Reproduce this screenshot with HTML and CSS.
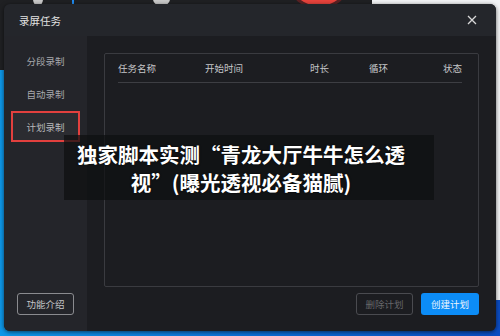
FILE: index.html
```html
<!DOCTYPE html>
<html lang="zh">
<head>
<meta charset="utf-8">
<title>录屏任务</title>
<link rel="stylesheet" href="styles.css">
</head>
<body>
<div class="desktop">
  <div class="bg-dark"></div>
  <div class="bg-light"></div>
  <div class="bg-blob b1"></div>
  <div class="bg-line"></div>
  <div class="bg-blob b2"></div>
  <div class="bg-red"></div>

  <div class="dialog">
    <div class="dlg-head">
      <span class="dlg-title">录屏任务</span>
      <svg class="close" width="10" height="10" viewBox="0 0 10 10"><path d="M1 1L9 9M9 1L1 9" stroke="#d8d8d8" stroke-width="1.3" fill="none"/></svg>
    </div>
    <div class="dlg-body">
      <nav class="side">
        <div class="side-item">分段录制</div>
        <div class="side-item">自动录制</div>
        <div class="side-item active">计划录制</div>
        <div class="side-spacer"></div>
        <button class="btn btn-outline">功能介绍</button>
      </nav>
      <main class="main">
        <div class="table">
          <div class="thead">
            <span class="c-name">任务名称</span>
            <span class="c-start">开始时间</span>
            <span class="c-dur">时长</span>
            <span class="c-loop">循环</span>
            <span class="c-state">状态</span>
          </div>
        </div>
        <div class="footer">
          <button class="btn btn-disabled">删除计划</button>
          <button class="btn btn-primary">创建计划</button>
        </div>
      </main>
    </div>
  </div>

  <div class="watermark">
    <p>独家脚本实测“青龙大厅牛牛怎么透<br>视”(曝光透视必备猫腻)</p>
  </div>
</div>
</body>
</html>
```
FILE: styles.css
```css
* { box-sizing: border-box; }
html, body { margin: 0; padding: 0; }
body {
  width: 500px;
  height: 336px;
  overflow: hidden;
  font-family: "Noto Sans CJK SC", "Noto Sans", sans-serif;
}
.desktop {
  position: relative;
  width: 500px;
  height: 336px;
  background: linear-gradient(to right, #0e97e8 0%, #0b6fd6 50%, #0b4cc2 100%);
  overflow: hidden;
}
.bg-dark {
  position: absolute; left: 0; top: 0; width: 372px; height: 70px;
  background: #1f2023;
}
.bg-light {
  position: absolute; left: 372px; top: 0; width: 128px; height: 300px;
  background: #f1f2f4;
}
.bg-blob { position: absolute; top: -8px; background: #c9c9c9; border-radius: 50%; }
.b1 { left: 33px; width: 10px; height: 14px; }
.b2 { left: 153px; width: 17px; height: 14px; }
.bg-line { position: absolute; left: 72px; top: 0; width: 2px; height: 8px; background: #1f8af0; }
.bg-red {
  position: absolute; left: 292px; top: -40px; width: 54px; height: 46px;
  border-radius: 50%; background: #e8433c; box-shadow: 0 0 0 3px #5a2224;
}

.dialog {
  position: absolute;
  left: 4px; top: 4px;
  width: 492px; height: 327px;
  border-radius: 6px;
  overflow: hidden;
  display: flex;
  flex-direction: column;
  background: #1c1d21;
  box-shadow: 0 1px 4px rgba(0,0,0,0.6);
}
.dlg-head {
  height: 32px;
  flex: none;
  background: #24262b;
  display: flex;
  align-items: center;
  justify-content: space-between;
  padding: 0 19px 0 15px;
}
.dlg-title { color: #e2e2e2; font-size: 10.5px; }
.close { display: block; }

.dlg-body { flex: 1; display: flex; min-height: 0; }
.side {
  width: 83px;
  flex: none;
  background: #24252a;
  display: flex;
  flex-direction: column;
  align-items: center;
  padding: 9px 0 16px;
}
.side-item {
  width: 69px;
  height: 31px;
  margin-bottom: 2px;
  display: flex;
  align-items: center;
  justify-content: center;
  color: #a8a9ad;
  font-size: 9.5px;
}
.side-item.active {
  border: 2px solid #e2403e;
  background: #2b2c31;
  color: #b8b9bc;
}
.side-spacer { flex: 1; }

.btn {
  height: 22px;
  border-radius: 3px;
  font-family: inherit;
  font-size: 9.5px;
  padding: 0;
  cursor: pointer;
}
.btn-outline {
  width: 57px;
  background: transparent;
  border: 1px solid #8a8b8f;
  color: #c4c5c8;
}
.btn-disabled {
  width: 57px;
  background: transparent;
  border: 1px solid #4a4b50;
  color: #65666a;
}
.btn-primary {
  width: 58px;
  background: #0c8cf6;
  border: none;
  color: #eef6ff;
}

.main {
  flex: 1;
  display: flex;
  flex-direction: column;
  padding: 17px 17px 16px;
}
.table {
  flex: 1;
  border: 1px solid #3a3b40;
  border-radius: 2px;
  padding: 0 16px 0 13px;
}
.thead {
  height: 29px;
  border-bottom: 1px solid #3d3e43;
  display: flex;
  align-items: center;
  color: #c6c7ca;
  font-size: 9.5px;
}
.thead span { white-space: nowrap; }
.c-name { width: 87px; }
.c-start { width: 105px; }
.c-dur { width: 59px; }
.c-loop { flex: 1; }
.c-state { text-align: right; }

.footer {
  display: flex;
  justify-content: flex-end;
  gap: 8px;
  margin-top: 6px;
}

.watermark {
  position: absolute;
  left: 64px; top: 135px;
  width: 370px; height: 65px;
  background: rgba(14, 15, 17, 0.72);
  display: flex;
  align-items: center;
}
.watermark p {
  margin: 0;
  width: 354px;
  text-align: center;
  color: #ffffff;
  font-weight: 700;
  font-size: 20.5px;
  line-height: 28px;
  text-shadow: 0 0 2px rgba(0,0,0,0.8);
}
```
